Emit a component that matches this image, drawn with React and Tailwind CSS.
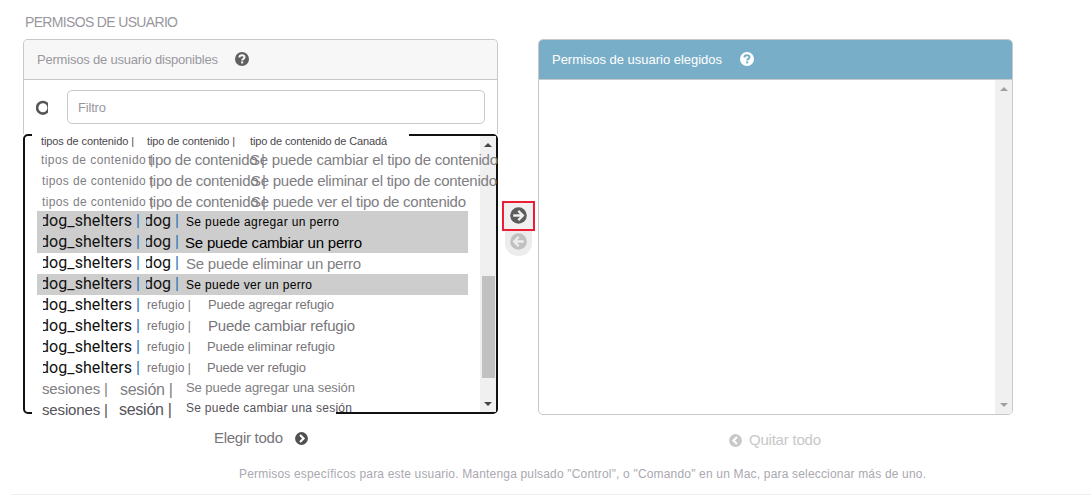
import { useLayoutEffect, useRef, useState } from 'react';

// Text spread with letter spacing so that it fills a given width.
function Fit({ w, className = '', children }) {
  const ref = useRef(null);
  const [ls, setLs] = useState(0);
  useLayoutEffect(() => {
    const natural = ref.current.getBoundingClientRect().width;
    setLs((w - natural) / (ref.current.textContent.length - 1));
  }, [w]);
  return (
    <span ref={ref} className={`inline-block justify-self-start whitespace-pre ${className}`} style={{ letterSpacing: ls + 'px' }}>
      {children}
    </span>
  );
}

function HelpIcon({ bg, fg }) {
  return (
    <svg width="14" height="14" viewBox="0 0 14 14" fill="none">
      <circle cx="7" cy="7" r="7" fill={bg} />
      <path d="M4.4 5.6C4.4 3.9 5.6 3.2 7 3.2s2.5.8 2.5 2.1c0 1.6-2.3 1.5-2.3 3.2" stroke={fg} strokeWidth="2" />
      <rect x="6.1" y="9.4" width="2.1" height="2" fill={fg} />
    </svg>
  );
}

function ArrowIcon({ bg, fg, left }) {
  return (
    <svg width="17" height="17" viewBox="0 0 17 17" fill="none" className={left ? 'rotate-180' : ''}>
      <circle cx="8.5" cy="8.5" r="8.3" fill={bg} />
      <path d="M3.2 8.5h9.3M8.3 3.9l4.6 4.6-4.6 4.6" stroke={fg} strokeWidth="2.3" />
    </svg>
  );
}

function ChevronIcon({ bg, left }) {
  return (
    <svg width="13" height="13" viewBox="0 0 13 13" fill="none" className={left ? 'rotate-180' : ''}>
      <circle cx="6.5" cy="6.5" r="6.4" fill={bg} />
      <path d="M5 3l3.6 3.5L5 10" stroke="#fff" strokeWidth="2.1" />
    </svg>
  );
}

function Caret({ color, down }) {
  return (
    <svg width="8" height="4" viewBox="0 0 8 4" className={down ? 'rotate-180' : ''}>
      <path d="M0 4L4 0l4 4z" fill={color} />
    </svg>
  );
}

const S = 'text-[12px]';
const M = 'text-[13px]';
const L = 'text-[15px]';
const G = 'text-[#807e83]';

function Pipe() {
  return <span className="text-[#1d6fb8]">|</span>;
}

function Shelters() {
  return (
    <span className="-mt-px block h-[21px] w-[100px] overflow-hidden whitespace-pre font-[Roboto] text-[16px] text-[#111]">
      <span className="-ml-[3px] mr-[4px] inline-block h-[21px] align-top"><Fit w={92}>dog_shelters</Fit></span>
      <Pipe />
    </span>
  );
}

function Dog() {
  return (
    <span className="-mt-px ml-px block h-[21px] w-[36px] overflow-hidden whitespace-pre font-[Roboto] text-[16px] text-[#111]">
      <span className="-ml-[2px] mr-[4px] inline-block h-[21px] align-top"><Fit w={27}>dog</Fit></span>
      <Pipe />
    </span>
  );
}

const contentRows = [
  { path: 112, verb: 'cambiar el tipo de contenido', w: 248, pad: 'pl-1' },
  { path: 111, verb: 'eliminar el tipo de contenido', w: 246, pad: 'pl-[5px]' },
  { path: 111, verb: 'ver el tipo de contenido', w: 215, pad: 'pl-[5px]' },
];
const dogRows = [
  { t: 'Se puede agregar un perro', w: 153, c: 'mt-px text-[12px] text-black', on: true },
  { t: 'Se puede cambiar un perro', w: 177, c: 'text-[15px] text-black -ml-px', on: true },
  { t: 'Se puede eliminar un perro', w: 175, c: 'text-[15px] text-[#807e83]', on: false },
  { t: 'Se puede ver un perro', w: 126, c: 'mt-px text-[12px] text-black', on: true },
];
const shelterRows = [
  { t: 'Puede agregar refugio', w: 126, c: 'text-[13px]' },
  { t: 'Puede cambiar refugio', w: 147, c: 'text-[15px]' },
  { t: 'Puede eliminar refugio', w: 128, c: 'text-[13px] -ml-px' },
  { t: 'Puede ver refugio', w: 99, c: 'text-[13px] -ml-px' },
];

export default function App() {
  return (
    <div className="h-[497px] w-[1091px] overflow-hidden bg-white pt-[12px] font-['Liberation_Sans',sans-serif] text-[#99979e]">
      <h1 className="h-[27px] pl-[25px] text-[14px] leading-[20px]"><Fit w={153}>PERMISOS DE USUARIO</Fit></h1>
      <div className="flex pl-[23px]">
        <section className="w-[475px]">
          <div className="h-[95px] rounded-t-[5px] border border-b-0 border-[#c8c8c8]">
            <header className="flex h-[40px] items-center rounded-t-[4px] border-b border-[#c8c8c8] bg-[#f7f7f7] pl-[13px] text-[13px]">
              <Fit w={181}>Permisos de usuario disponibles</Fit>
              <span className="-mt-[2px] ml-[17px]"><HelpIcon bg="#606060" fg="#f7f7f7" /></span>
            </header>
            <div className="flex items-start pl-[12px] pt-[10px]">
              <svg width="12" height="16" viewBox="0 0 12 16" className="mt-[10px]" fill="none">
                <circle cx="6.9" cy="7.8" r="5.8" stroke="#555" strokeWidth="2.6" />
              </svg>
              <div className="ml-[19px] h-[34px] w-[418px] rounded-[5px] border border-[#c8c8c8] pl-[10px] text-[13px] leading-[34px]">
                <Fit w={28}>Filtro</Fit>
              </div>
            </div>
          </div>
          <div className="relative h-[280px] w-[475px] rounded-[5px] border-2 border-[#111]">
            <div className="absolute -top-[2px] left-[7px] h-[2px] w-[377px] bg-white" />
            <div className="absolute -bottom-[2px] left-[7px] h-[2px] w-[304px] bg-white" />
            <div className="flex h-full">
              <div className="w-[455px] pl-[12px] leading-[21px]">
                <div className="relative z-10 w-[461px]">
                  <div className="-mt-[5px] grid h-[18px] grid-cols-[106px_103px_1fr] whitespace-nowrap pl-1 text-[11px] text-[#4b484d]">
                    <Fit w={93}>tipos de contenido |</Fit>
                    <Fit w={88}>tipo de contenido |</Fit>
                    <Fit w={137}>tipo de contenido de Canadá</Fit>
                  </div>
                  <div>
                    {contentRows.map((r) => (
                      <div key={r.verb} className={`grid h-[21px] grid-cols-[107px_102px_1fr] ${r.pad} ${G}`}>
                        <Fit w={r.path} className={`${S} mt-px`}>tipos de contenido |</Fit>
                        <Fit w={117} className={L}>tipo de contenido |</Fit>
                        <Fit w={r.w} className={L}>{'Se puede ' + r.verb}</Fit>
                      </div>
                    ))}
                  </div>
                </div>
                <div className="-mt-px w-[431px]">
                  {dogRows.map((r) => (
                    <div key={r.t} className={`grid h-[21px] grid-cols-[102px_41px_1fr] pl-[6px] ${r.on ? 'bg-[#cdcdcd]' : ''}`}>
                      <Shelters />
                      <Dog />
                      <Fit w={r.w} className={r.c}>{r.t}</Fit>
                    </div>
                  ))}
                  {shelterRows.map((r) => (
                    <div key={r.t} className="grid h-[21px] grid-cols-[104px_61px_1fr] pl-[6px] text-[#77757a]">
                      <Shelters />
                      <Fit w={44} className={S}>refugio |</Fit>
                      <Fit w={r.w} className={`${r.c} -mt-px`}>{r.t}</Fit>
                    </div>
                  ))}
                  <div className="grid h-[21px] grid-cols-[78px_66px_1fr] pl-[5px] text-[#807e83]">
                    <Fit w={66} className={`${L} -mt-px`}>sesiones |</Fit>
                    <Fit w={53} className="text-[16px]">sesión |</Fit>
                    <Fit w={169} className={`${M} -mt-[2px]`}>Se puede agregar una sesión</Fit>
                  </div>
                  <div className="relative z-10 grid h-[21px] grid-cols-[78px_66px_1fr] pl-[5px] text-[#55535a]">
                    <Fit w={66} className={`${L} -mt-px`}>sesiones |</Fit>
                    <Fit w={53} className="-ml-px -mt-px text-[16px]">sesión |</Fit>
                    <Fit w={166} className={`${S} -mt-[2px]`}>Se puede cambiar una sesión</Fit>
                  </div>
                </div>
              </div>
              <div className="flex h-full w-[16px] flex-col items-center bg-[#f0f0f0] pb-[6px] pt-[7px]">
                <Caret color="#444" />
                <div className="mt-[129px] h-[102px] w-[13px] bg-[#c1c1c1]" />
                <div className="mt-auto flex"><Caret color="#444" down /></div>
              </div>
            </div>
          </div>
          <div className="flex h-[48px] items-center pl-[191px] text-[15px] text-[#77757a]">
            <Fit w={69}>Elegir todo</Fit>
            <span className="ml-[12px]"><ChevronIcon bg="#505050" /></span>
          </div>
        </section>

        <div className="w-[40px] pl-[4px] pt-[162px]">
          <div className="h-[55px] w-[33px]">
            <div className="flex h-[30px] items-center justify-center border-2 border-[#ee1c35] bg-[#f0f0f0] pb-[2px] pr-px">
              <ArrowIcon bg="#5c5c5c" fg="#f0f0f0" />
            </div>
            <div className="ml-[3px] flex h-[25px] w-[27px] justify-center rounded-b-[13px] bg-[#ececec] pt-[2px]">
              <ArrowIcon bg="#c0c0c0" fg="#ececec" left />
            </div>
          </div>
        </div>

        <section className="w-[475px]">
          <div className="flex h-[376px] flex-col overflow-hidden rounded-[5px] border border-[#c8c8c8]">
            <header className="flex h-[40px] items-center border-b border-[#c8c8c8] bg-[#79aec8] pl-[13px] pt-px text-[13px] text-white">
              <Fit w={170}>Permisos de usuario elegidos</Fit>
              <span className="-mt-[2px] ml-[18px]"><HelpIcon bg="#fff" fg="#79aec8" /></span>
            </header>
            <div className="ml-auto flex w-[17px] flex-1 flex-col items-center justify-between bg-[#f0f0f0] pb-[7px] pt-[7px]">
              <Caret color="#a0a0a0" />
              <Caret color="#a0a0a0" down />
            </div>
          </div>
          <div className="flex h-[47px] items-center pl-[191px] pt-[3px] text-[15px] text-[#c8c8c8]">
            <ChevronIcon bg="#c8c8c8" left />
            <Fit w={72} className="ml-[7px]">Quitar todo</Fit>
          </div>
        </section>
      </div>
      <p className="h-[32px] pl-[239px] pt-[3px] text-[12px] leading-[18px] text-[#aaa8b0]">
        <Fit w={687}>Permisos específicos para este usuario. Mantenga pulsado "Control", o "Comando" en un Mac, para seleccionar más de uno.</Fit>
      </p>
      <div className="ml-[11px] h-px bg-[#eee]" />
    </div>
  );
}
